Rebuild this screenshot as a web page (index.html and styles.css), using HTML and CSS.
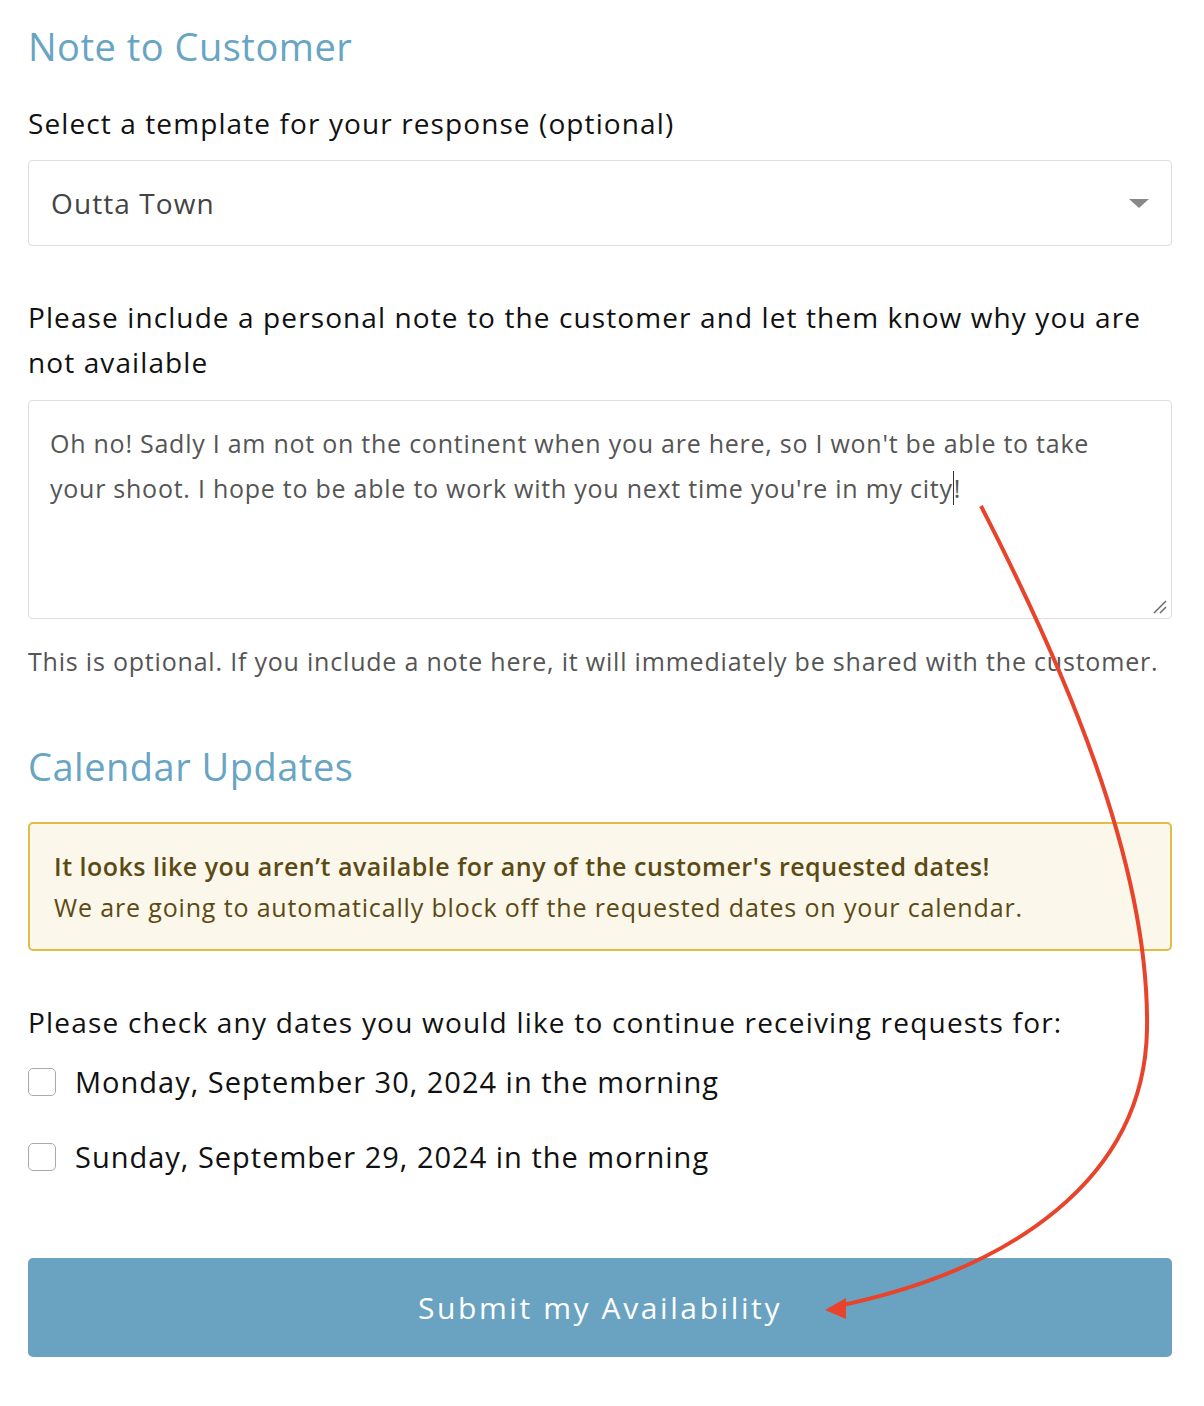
FILE: index.html
```html
<!DOCTYPE html>
<html lang="en">
<head>
  <meta charset="UTF-8">
  <title>Note to Customer</title>
  <link rel="stylesheet" href="styles.css">
</head>
<body>
  <div class="page">
    <h2 class="section-title">Note to Customer</h2>

    <label class="field-label" for="template">Select a template for your response (optional)</label>
    <div class="select-box">
      <span class="select-value">Outta Town</span>
      <span class="select-caret"></span>
    </div>

    <label class="field-label note-label" for="note">Please include a personal note to the customer and let them know why you are not available</label>
    <div class="textarea-box">
      <p class="textarea-text">Oh no! Sadly I am not on the continent when you are here, so I won't be able to take your shoot. I hope to be able to work with you next time you're in my city<span class="caret">!</span></p>
      <svg class="resize-grip" width="14" height="14" viewBox="0 0 14 14">
        <line x1="1" y1="13" x2="13" y2="1" stroke="#666" stroke-width="1.4"/>
        <line x1="7" y1="13" x2="13" y2="7" stroke="#666" stroke-width="1.4"/>
      </svg>
    </div>
    <p class="help-text">This is optional. If you include a note here, it will immediately be shared with the customer.</p>

    <h2 class="section-title calendar-title">Calendar Updates</h2>

    <div class="notice">
      <strong>It looks like you aren’t available for any of the customer's requested dates!</strong>
      <span>We are going to automatically block off the requested dates on your calendar.</span>
    </div>

    <p class="check-intro">Please check any dates you would like to continue receiving requests for:</p>
    <div class="check-list">
      <label class="check-row"><span class="check-box"></span>Monday, September 30, 2024 in the morning</label>
      <label class="check-row"><span class="check-box"></span>Sunday, September 29, 2024 in the morning</label>
    </div>

    <button class="submit-btn" type="button">Submit my Availability</button>
  </div>

  <!-- annotation arrow drawn over the form -->
  <svg class="annotation" width="1204" height="1406" viewBox="0 0 1204 1406">
    <path d="M981,506 C1060,660 1150,860 1147,1030 C1144,1180 1010,1270 838,1306" fill="none" stroke="#e8432b" stroke-width="4"/>
    <polygon points="825,1310 846,1298 846,1319" fill="#e8432b"/>
  </svg>
</body>
</html>
```

FILE: styles.css
```css
body {
  margin: 0;
  font-family: "Open Sans", Lato, sans-serif;
  font-weight: 500;
  color: #111;
  background: #fff;
}
.page {
  position: relative;
  padding: 21px 32px 40px 28px;
  display: flex;
  flex-direction: column;
}
.section-title {
  margin: 0;
  font-size: 38px;
  font-weight: 500;
  letter-spacing: 0.5px;
  color: #68a5c4;
  line-height: 50px;
}
.field-label {
  display: block;
  font-size: 28px;
  letter-spacing: 1.1px;
  line-height: 45px;
  margin-top: 30px;
  color: #111;
}
.select-box {
  margin-top: 14px;
  height: 84px;
  border: 1px solid #ddd;
  border-radius: 4px;
  display: flex;
  align-items: center;
  justify-content: space-between;
  padding: 0 22px;
}
.select-value {
  font-size: 28px;
  letter-spacing: 1.1px;
  color: #444;
}
.select-caret {
  width: 0;
  height: 0;
  border-left: 10px solid transparent;
  border-right: 10px solid transparent;
  border-top: 9px solid #888;
}
.note-label {
  margin-top: 49px;
}
.textarea-box {
  position: relative;
  margin-top: 15px;
  height: 219px;
  border: 1px solid #ddd;
  border-radius: 4px;
  padding: 20px 21px;
  box-sizing: border-box;
}
.textarea-text {
  margin: 0;
  font-size: 25px;
  letter-spacing: 0.75px;
  line-height: 45px;
  color: #555;
}
.caret {
  border-left: 1px solid #333;
}
.resize-grip {
  position: absolute;
  right: 4px;
  bottom: 4px;
}
.help-text {
  margin: 22px 0 0;
  font-size: 25px;
  letter-spacing: 0.8px;
  line-height: 40px;
  color: #555;
}
.calendar-title {
  margin-top: 60px;
}
.notice {
  margin-top: 31px;
  border: 2px solid #e2bd46;
  border-radius: 5px;
  background: #fbf7ea;
  color: #5c4a14;
  font-size: 25px;
  letter-spacing: 0.85px;
  line-height: 41px;
  padding: 22px 24px 21px;
  display: flex;
  flex-direction: column;
}
.notice strong {
  font-weight: 600;
  letter-spacing: 0.5px;
}
.check-intro {
  margin: 49px 0 0;
  font-size: 28px;
  letter-spacing: 1.2px;
  line-height: 45px;
}
.check-list {
  display: flex;
  flex-direction: column;
  gap: 30px;
  margin-top: 14px;
}
.check-row {
  display: flex;
  align-items: center;
  gap: 19px;
  font-size: 29px;
  letter-spacing: 1px;
  line-height: 45px;
}
.check-box {
  width: 28px;
  height: 28px;
  border: 1.5px solid #aaa;
  border-radius: 5px;
  box-sizing: border-box;
}
.submit-btn {
  margin-top: 79px;
  height: 99px;
  border: none;
  border-radius: 5px;
  background: #6aa3c1;
  color: #fff;
  font-family: inherit;
  font-size: 30px;
  letter-spacing: 2.6px;
  font-weight: 500;
}
.annotation {
  position: absolute;
  left: 0;
  top: 0;
  pointer-events: none;
}
```
